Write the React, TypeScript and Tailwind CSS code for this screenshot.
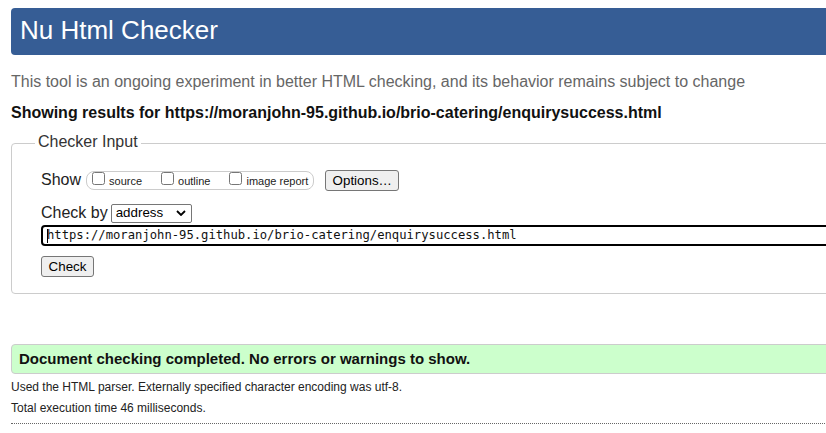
import React from 'react';

const options = [
  { label: 'source', gap: 'mr-[19px]' },
  { label: 'outline', gap: 'mr-[19px]' },
  { label: 'image report', gap: '' },
];

export default function App() {
  return (
    <div className="w-full h-[433px] overflow-hidden bg-white font-['Liberation_Sans',Arial,sans-serif] text-[#222]">
      <div className="w-[1100px] px-[11px] pt-[8px]">
        {/* Header */}
        <header className="h-[47px] rounded-[4px] bg-[#365d95] pl-[9px] pb-[2px] flex items-center">
          <h1 className="text-[26px] text-white font-normal">Nu Html Checker</h1>
        </header>

        <p className="mt-[17px] text-[16px] leading-[20px] text-[#666]">
          This tool is an ongoing experiment in better HTML checking, and its behavior remains subject to change
        </p>
        <p className="mt-[11px] text-[16px] leading-[20px] font-bold text-[#111]">
          Showing results for https://moranjohn-95.github.io/brio-catering/enquirysuccess.html
        </p>

        {/* Checker input */}
        <fieldset className="mt-[9px] border border-[#ccc] rounded-[4px] px-[29px] pb-[15px]">
          <legend className="ml-[-6px] px-[3px] pb-[3px] text-[16px] leading-[20px] text-[#333]">Checker Input</legend>
          <div className="flex flex-col pt-[14px]">
            <div className="flex items-center h-[22px]">
              <span className="text-[16px] leading-[20px]">Show</span>
              <div className="ml-[5px] h-[19px] flex items-start rounded-[8px] border border-[#ccc] pl-[5px] pr-[5px]">
                {options.map((o) => (
                  <label key={o.label} className={`flex items-start ${o.gap}`}>
                    <input type="checkbox" className="m-0 w-[13px] h-[13px]" />
                    <span className="ml-[4px] mt-[3px] text-[11px] leading-[13px] text-[#222]">{o.label}</span>
                  </label>
                ))}
              </div>
              <button className="ml-[11px] h-[21px] w-[74px] bg-[#efefef] border border-[#767676] rounded-[3px] text-[13.33px] text-black">
                Options…
              </button>
            </div>

            <div className="mt-[12px] flex items-center h-[20px]">
              <span className="text-[16px] leading-[20px]">Check by</span>
              <div className="ml-[3px] h-[19px] w-[81px] flex items-center justify-between border border-[#767676] rounded-[2px] pl-[4px] pr-[5px] text-[13.33px] text-black">
                <span>address</span>
                <svg width="10" height="6" viewBox="0 0 10 6" fill="none">
                  <path d="M1 1l4 4 4-4" stroke="#000" strokeWidth="1.8" />
                </svg>
              </div>
            </div>

            <div className="mt-[2px] h-[21px] w-[1000px] border-2 border-black rounded-[4px] flex items-center pl-[4px] font-['DejaVu_Sans_Mono',monospace] text-[12.2px] text-[#111]">
              <span className="w-[1px] h-[14px] bg-black mr-[-1px]" />
              <span>https://moranjohn-95.github.io/brio-catering/enquirysuccess.html</span>
            </div>

            <div className="mt-[8px]">
              <button className="h-[21px] w-[53px] bg-[#efefef] border border-[#767676] rounded-[3px] text-[13.33px] text-black">
                Check
              </button>
            </div>
          </div>
        </fieldset>

        {/* Result */}
        <div className="mt-[50px] h-[30px] border border-[#ccc] rounded-[4px] bg-[#ccffcc] flex items-center pl-[7px]">
          <span className="text-[15px] font-bold text-[#111]">Document checking completed. No errors or warnings to show.</span>
        </div>
        <p className="mt-[3px] text-[12px] leading-[21px] text-[#222]">
          Used the HTML parser. Externally specified character encoding was utf-8.
        </p>
        <p className="text-[12px] leading-[21px] text-[#222]">Total execution time 46 milliseconds.</p>
        <div className="mt-[4px] border-t border-dotted border-[#666]" />
      </div>
    </div>
  );
}
